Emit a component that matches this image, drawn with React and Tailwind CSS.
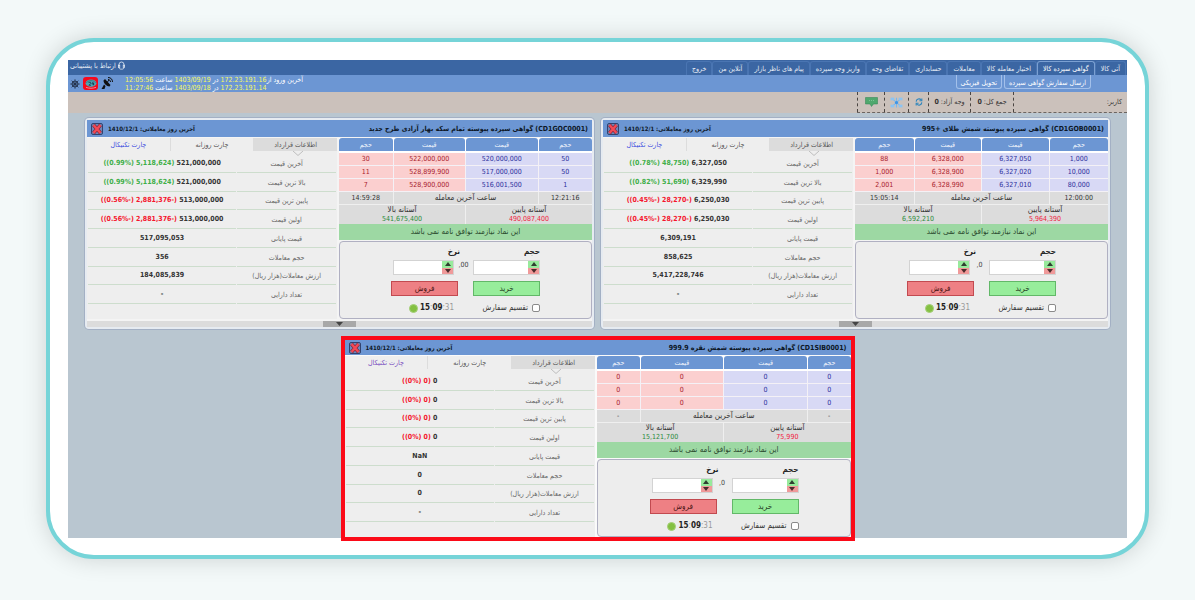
import React, { useState } from 'react';

const navItems = [
  { title: 'آتی کالا' },
  { title: 'گواهی سپرده کالا', active: true },
  { title: 'اختیار معامله کالا' },
  { title: 'معاملات' },
  { title: 'حسابداری' },
  { title: 'تقاضای وجه' },
  { title: 'واریز وجه سپرده' },
  { title: 'پیام های ناظر بازار' },
  { title: 'آنلاین من' },
  { title: 'خروج' },
];

const logins = [
  { label: 'آخرین ورود از', ip: '172.23.191.16', date: '1403/09/19', time: '12:05:56' },
  { label: '', ip: '172.23.191.14', date: '1403/09/18', time: '11:27:46' },
];

const coin = {
  code: 'CD1GOC0001',
  title: 'گواهی سپرده پیوسته تمام سکه بهار آزادی طرح جدید',
  suffix: '',
  decimals: ',00',
  sideCol: 'w-[54px]',
  orders: [
    ['50', '520,000,000', '522,000,000', '30'],
    ['50', '517,000,000', '528,899,900', '11'],
    ['1', '516,001,500', '528,900,000', '7'],
  ],
  times: ['12:21:16', '14:59:28'],
  low: '490,087,400',
  high: '541,675,400',
  info: [
    { label: 'آخرین قیمت', value: '521,000,000', change: '((0.99%) 5,118,624)', up: true },
    { label: 'بالا ترین قیمت', value: '521,000,000', change: '((0.99%) 5,118,624)', up: true },
    { label: 'پایین ترین قیمت', value: '513,000,000', change: '((0.56%-) 2,881,376-)' },
    { label: 'اولین قیمت', value: '513,000,000', change: '((0.56%-) 2,881,376-)' },
    { label: 'قیمت پایانی', value: '517,095,053' },
    { label: 'حجم معاملات', value: '356' },
    { label: 'ارزش معاملات(هزار ریال)', value: '184,085,839' },
    { label: 'تعداد دارایی', value: '-' },
  ],
};

const gold = {
  code: 'CD1GOB0001',
  title: 'گواهی سپرده پیوسته شمش طلای',
  suffix: '995+',
  decimals: ',0',
  sideCol: 'w-[59px]',
  orders: [
    ['1,000', '6,327,050', '6,328,000', '88'],
    ['10,000', '6,327,020', '6,328,900', '1,000'],
    ['80,000', '6,327,010', '6,328,990', '2,001'],
  ],
  times: ['12:00:00', '15:05:14'],
  low: '5,964,390',
  high: '6,592,210',
  info: [
    { label: 'آخرین قیمت', value: '6,327,050', change: '((0.78%) 48,750)', up: true },
    { label: 'بالا ترین قیمت', value: '6,329,990', change: '((0.82%) 51,690)', up: true },
    { label: 'پایین ترین قیمت', value: '6,250,030', change: '((0.45%-) 28,270-)' },
    { label: 'اولین قیمت', value: '6,250,030', change: '((0.45%-) 28,270-)' },
    { label: 'قیمت پایانی', value: '6,309,191' },
    { label: 'حجم معاملات', value: '858,625' },
    { label: 'ارزش معاملات(هزار ریال)', value: '5,417,228,746' },
    { label: 'تعداد دارایی', value: '-' },
  ],
};

const silver = {
  code: 'CD1SIB0001',
  title: 'گواهی سپرده پیوسته شمش نقره',
  suffix: '999.9',
  decimals: ',0',
  sideCol: 'w-[43px]',
  selected: true,
  orders: [
    ['0', '0', '0', '0'],
    ['0', '0', '0', '0'],
    ['0', '0', '0', '0'],
  ],
  times: ['-', '-'],
  low: '75,990',
  high: '15,121,700',
  info: [
    { label: 'آخرین قیمت', value: '0', change: '((0%) 0)' },
    { label: 'بالا ترین قیمت', value: '0', change: '((0%) 0)' },
    { label: 'پایین ترین قیمت', value: '0', change: '((0%) 0)' },
    { label: 'اولین قیمت', value: '0', change: '((0%) 0)' },
    { label: 'قیمت پایانی', value: 'NaN' },
    { label: 'حجم معاملات', value: '0' },
    { label: 'ارزش معاملات(هزار ریال)', value: '0' },
    { label: 'تعداد دارایی', value: '-' },
  ],
};

const HeadsetIcon = () => (
  <svg viewBox="0 0 8 10" className="w-[7px] h-[9px]" fill="none" stroke="#e6edf6" strokeWidth="0.9">
    <path d="M1.2 6V3.8a2.8 2.8 0 0 1 5.6 0V6" />
    <rect x="0.6" y="4.6" width="1.4" height="2.8" />
    <rect x="6" y="4.6" width="1.4" height="2.8" />
    <path d="M6.8 7.6C6.6 8.8 5.6 9.2 4 9.2S1.4 8.8 1.2 7.6" />
  </svg>
);

const GearIcon = () => (
  <svg viewBox="0 0 20 20" className="w-[10px] h-[10px]" stroke="#22304a" fill="none">
    <circle cx="10" cy="10" r="6" strokeWidth="1.8" />
    <circle cx="10" cy="10" r="2" strokeWidth="1.6" />
    <path
      strokeWidth="1.6"
      d="M10 0.5v19M0.5 10h19M3.3 3.3l13.4 13.4M16.7 3.3L3.3 16.7"
    />
  </svg>
);

const GlobeIcon = () => (
  <svg viewBox="0 0 28 24" className="w-[12px] h-[10px]" fill="none">
    <ellipse cx="14" cy="10" rx="13" ry="9" fill="#4fa5b3" />
    <path d="M3 9c3-4 7-5 11-5s8 1 11 5" stroke="#2f7482" strokeWidth="2" />
    <path d="M8 8h5v3l-4 4h5M19 7l-3 5h6M20 9v6" stroke="#14324a" strokeWidth="1.8" />
    <path d="M2 20c7 3 17 3 24 0" stroke="#e0a6ae" strokeWidth="2" />
  </svg>
);

const DishIcon = () => (
  <svg viewBox="0 0 24 26" className="w-[12px] h-[13px]">
    <path d="M5 7c0 5 6 12 12 12l2-3L8 4z" fill="#111" />
    <path d="M6 15l-5 9h6l2-6z" fill="#111" />
    <path d="M12 11l4-5" stroke="#111" strokeWidth="2" />
    <path d="M14 5c3 0 5 2 5 5M14 1c6 0 9 4 9 9" stroke="#111" strokeWidth="2" fill="none" />
  </svg>
);

const RefreshIcon = () => (
  <svg viewBox="0 0 20 20" className="w-[8px] h-[8px]" fill="none" stroke="#2f86bd" strokeWidth="2.8">
    <path d="M3 9a7 7 0 0 1 12.5-4M17 11a7 7 0 0 1-12.5 4" />
    <path d="M17 1v6h-6M3 19v-6h6" />
  </svg>
);

const NetworkIcon = () => (
  <svg viewBox="0 0 24 20" className="w-[13px] h-[11px] shrink-0" stroke="#7ab8ec" strokeWidth="2">
    <path d="M4 3l16 14M20 3L4 17M12 1v18" fill="none" />
    <circle cx="12" cy="10" r="3" fill="#3f95e6" stroke="none" />
    <rect x="1" y="1" width="7" height="5" fill="#8cc4f2" stroke="none" />
    <rect x="16" y="1" width="7" height="5" fill="#8cc4f2" stroke="none" />
    <rect x="1" y="14" width="7" height="5" fill="#8cc4f2" stroke="none" />
    <rect x="16" y="14" width="7" height="5" fill="#8cc4f2" stroke="none" />
  </svg>
);

const MessageIcon = () => (
  <svg viewBox="0 0 26 20" className="w-[13px] h-[10px]">
    <path d="M1 1h24v13h-8l-4 5-3-5H1z" fill="#4fa86e" stroke="#2f8350" />
    <path d="M8 7h2M12 7h2M16 7h2" stroke="#7cc493" strokeWidth="2" />
  </svg>
);

const CloseIcon = () => (
  <svg viewBox="0 0 24 24" className="w-full h-full">
    <rect x="1" y="1" width="22" height="22" rx="3" fill="#6f86b8" stroke="#33436e" strokeWidth="2" />
    <path d="M5 4l14 16M19 4L5 20" stroke="#7c2238" strokeWidth="7" />
    <path d="M5 4l14 16M19 4L5 20" stroke="#f24a56" strokeWidth="5" />
  </svg>
);

const Spinner = ({ label, className }) => {
  const [value, setValue] = useState('');

  const step = (n) => setValue(String(Math.max(0, Number(value) + n)));

  return (
    <div className={`flex h-[15px] bg-white border border-[#d3d3d3] ${className}`}>
      <div className="flex flex-col w-[11px] shrink-0">
        <button type="button" aria-label="افزایش" onClick={() => step(1)} className="flex-1 flex items-center justify-center bg-[#98ea9c]">
          <svg viewBox="0 0 8 4" className="w-[8px] h-[4px]"><path d="M1 4l3-4 3 4z" fill="#2f4030" /></svg>
        </button>
        <button type="button" aria-label="کاهش" onClick={() => step(-1)} className="flex-1 flex items-center justify-center bg-[#f09a9a]">
          <svg viewBox="0 0 8 4" className="w-[8px] h-[4px]"><path d="M1 0l3 4 3-4z" fill="#4a2c2c" /></svg>
        </button>
      </div>
      <input
        type="text"
        aria-label={label}
        value={value}
        onChange={(e) => setValue(e.target.value)}
        className="flex-1 min-w-0 outline-none"
      />
    </div>
  );
};

const OrderForm = ({ decimals }) => {
  const [split, setSplit] = useState(false);

  return (
    <form
      onSubmit={(e) => e.preventDefault()}
      className="h-[78px] pt-[4px] pr-[51px] bg-[#ededed] border border-[#b0b0c2] rounded-[4px]"
    >
      <div className="flex h-[14px] text-[8px] leading-[12px] font-bold text-[#222]">
        <span className="w-[80px]">حجم</span>
        <span>نرخ</span>
      </div>
      <div className="flex">
        <Spinner label="حجم" className="w-[67px]" />
        <span dir="ltr" className="w-[19px] text-center text-[#444]">{decimals}</span>
        <Spinner label="نرخ" className="w-[61px]" />
      </div>
      <div className="flex gap-[15px] mt-[6px] text-[8px]">
        <button type="button" className="w-[67px] h-[15px] leading-[12px] bg-[#97ed9b] border border-[#62b868] text-[#1f3a1f]">خرید</button>
        <button type="button" className="w-[67px] h-[15px] leading-[12px] bg-[#ee8084] border border-[#c24a50] text-[#4a1414]">فروش</button>
      </div>
      <div className="flex items-center h-[14px] mt-[5px]">
        <label className="flex items-center gap-[4px] w-[86px] text-[8px] text-[#333]">
          <input
            type="checkbox"
            checked={split}
            onChange={(e) => setSplit(e.target.checked)}
            className="appearance-none w-[8px] h-[8px] bg-white border border-[#8a8a8a] rounded-[2px] checked:bg-[#3b66a3]"
          />
          تقسیم سفارش
        </label>
        <span dir="ltr" className="flex items-center gap-[2px]">
          <span className="w-[9px] h-[9px] rounded-full bg-[#84c042] border border-[#a4cf78]" />
          <span className="text-[8px] text-[#999]">
            <b className="text-[#222]">15</b>:<b className="text-[#222]">09</b>:31
          </span>
        </span>
      </div>
    </form>
  );
};

const OrderBook = ({ item }) => (
  <table className="w-full table-fixed border-collapse text-center">
    <colgroup>
      <col className={item.sideCol} />
      <col />
      <col />
      <col className={item.sideCol} />
    </colgroup>
    <thead>
      <tr className="h-[14px] text-[#eef3fb]">
        {['حجم', 'قیمت', 'قیمت', 'حجم'].map((h, i) => (
          <th key={i} className="p-0 font-normal border-b border-l last:border-l-0 border-white bg-white">
            <div className="h-[13px] leading-[15px] bg-[#6c96d3] rounded-t-[3px]">{h}</div>
          </th>
        ))}
      </tr>
    </thead>
    <tbody>
      {item.orders.map((row, i) => (
        <tr key={i} className="h-[13px]">
          {row.map((cell, j) => (
            <td
              key={j}
              className={`p-0 leading-[12px] border-b border-l last:border-l-0 border-[#f4f1f6] ${j < 2 ? 'bg-[#d8d9f5] text-[#2c2f9c]' : 'bg-[#fbcfcf] text-[#a8202c]'}`}
            >
              {cell}
            </td>
          ))}
        </tr>
      ))}
      <tr className="h-[13px] bg-[#dcdcdc] text-[#333]">
        <td className="p-0 leading-[12px] border-b border-l border-[#efefef]">{item.times[0]}</td>
        <td colSpan={2} className="p-0 leading-[12px] border-b border-l border-[#efefef] text-[8px]">ساعت آخرین معامله</td>
        <td className="p-0 leading-[12px] border-b border-[#efefef]">{item.times[1]}</td>
      </tr>
      <tr className="h-[20px] bg-[#dcdcdc] text-[#333]">
        <td colSpan={2} className="p-0 border-l border-[#efefef]">
          <div className="text-[8px] leading-[10px]">آستانه پایین</div>
          <div className="leading-[9px] text-[#f0203c]">{item.low}</div>
        </td>
        <td colSpan={2} className="p-0">
          <div className="text-[8px] leading-[10px]">آستانه بالا</div>
          <div className="leading-[9px] text-[#2a8a3a]">{item.high}</div>
        </td>
      </tr>
    </tbody>
  </table>
);

const InfoTab = ({ item }) => (
  <div className="min-w-0 bg-[#eeeeee]">
    <div className="relative flex h-[13px] text-[#555] leading-[15px]">
      <button type="button" className="flex-1 bg-[#dcdcdc]">اطلاعات قرارداد</button>
      <button type="button" className="flex-1 border-r border-[#dcdcdc]">چارت روزانه</button>
      <button type="button" className={`flex-1 border-r border-[#dcdcdc] ${item.selected ? 'text-[#7a4fc0]' : 'text-[#3f50e0]'}`}>چارت تکنیکال</button>
      <svg viewBox="0 0 12 6" className="absolute top-[13px] right-[33px] w-[12px] h-[5px]">
        <path d="M0 0l6 5.4 6-5.4" fill="#eeeeee" stroke="#b4b4b4" />
      </svg>
    </div>
    <table className="w-full h-[150px] mt-[3px] table-fixed border-separate [border-spacing:1px_0] text-center">
      <colgroup>
        <col className="w-2/5" />
        <col />
      </colgroup>
      <tbody>
        {item.info.map((row) => (
          <tr key={row.label}>
            <th scope="row" className="p-0 pt-[2px] font-normal leading-[12px] text-[#666] border-b border-[#cdddcd]">{row.label}</th>
            <td dir="ltr" className="p-0 leading-[12px] font-bold text-[#333] border-b border-[#cdddcd] whitespace-nowrap">
              {row.change && (
                <span className={row.up ? 'text-[#3fae49]' : 'text-[#f5142c]'}>{row.change} </span>
              )}
              {row.value}
            </td>
          </tr>
        ))}
      </tbody>
    </table>
  </div>
);

const ContractPanel = ({ item }) => (
  <section
    className={
      item.selected
        ? 'w-[514px] bg-[#fafafa] border-4 border-[#fb0a18]'
        : 'bg-[#f4f4f4] border-2 border-[#e6ebf1] rounded-[4px] shadow-[0_0_0_1px_#a3b0c4]'
    }
  >
    <header className={`flex items-center justify-between bg-[#6c96d3] px-[4px] text-[#0d1626] font-bold ${item.selected ? 'h-[15px]' : 'h-[17px]'}`}>
      <h2>
        <bdi dir="ltr">({item.code})</bdi> {item.title} <bdi dir="ltr">{item.suffix}</bdi>
      </h2>
      <div className="flex items-center gap-[5px]">
        <span className="text-[6px] whitespace-nowrap">آخرین روز معاملاتی: 1410/12/1</span>
        <button type="button" aria-label="بستن" className="w-[12px] h-[12px]"><CloseIcon /></button>
      </div>
    </header>
    <div className="grid grid-cols-[253fr_250fr] gap-[2px] mt-[1px]">
      <div className="min-w-0">
        <OrderBook item={item} />
        <p className="h-[16px] mb-[1px] leading-[15px] bg-[#9dd8a3] text-center text-[8px] text-[#2b4a2f]">
          این نماد نیازمند توافق نامه نمی باشد
        </p>
        <OrderForm decimals={item.decimals} />
      </div>
      <InfoTab item={item} />
    </div>
    {!item.selected && (
      <div className="flex justify-center h-[6px] mt-[2px] bg-[#dcdcdc]">
        <button type="button" aria-label="بستن جزئیات" className="flex items-center justify-center w-[33px] bg-[#a8a8a8]">
          <svg viewBox="0 0 7 4" className="w-[7px] h-[4px]"><path d="M0 0h7L3.5 4z" fill="#444" /></svg>
        </button>
      </div>
    )}
  </section>
);

const App = () => {
  return (
    <div className="min-h-screen bg-[#f3f9f9] px-[46px] pt-[38px] pb-[40px]">
      <div className="bg-white border-4 border-[#76d4d8] rounded-[48px] p-[18px] pb-[17px] shadow-[0_0_24px_rgba(0,0,0,0.16)]">
        <div dir="rtl" className='bg-[#b9c6d0] text-[7px] leading-[10px] font-["DejaVu_Sans_Condensed","DejaVu_Sans",sans-serif]'>
          <div className="flex justify-between h-[15px] bg-[#3b66a3] text-[#e8eef6] pr-[1px]">
            <nav className="flex items-end">
              {navItems.map((item) => (
                <a
                  key={item.title}
                  href="#"
                  className={`h-[14px] px-[5px] leading-[15px] border-x border-t rounded-t-[3px] whitespace-nowrap ${item.active ? 'border-[#7ba0d2] text-white' : 'border-[#4a75b2]'}`}
                >
                  {item.title}
                </a>
              ))}
            </nav>
            <a href="#" className="flex items-center h-[11px] gap-[2px] pl-[2px]">
              <HeadsetIcon />
              ارتباط با پشتیبانی
            </a>
          </div>

          <div className="flex justify-between h-[17px] bg-[#6c96d3] text-white pr-[36px]">
            <nav className="flex gap-[2px]">
              <a href="#" className="h-[14px] px-[4px] leading-[16px] border-x border-b border-[#a3c0ea] rounded-b-[3px] whitespace-nowrap">ارسال سفارش گواهی سپرده</a>
              <a href="#" className="h-[14px] px-[4px] leading-[16px] border-x border-b border-[#a3c0ea] rounded-b-[3px] whitespace-nowrap">تحویل فیزیکی</a>
            </nav>
            <div className="flex items-center gap-[12px]">
              <div className="text-left leading-[8px]">
                {logins.map((l) => (
                  <div key={l.ip}>
                    {l.label}
                    <span className="text-[#f8f860]">{l.ip}</span> در <span className="text-[#f8f860]">{l.date}</span> ساعت <span className="text-[#f8f860]">{l.time}</span>
                  </div>
                ))}
              </div>
              <div className="flex items-center gap-[3px] pl-[2px]">
                <button type="button" aria-label="ارتباط"><DishIcon /></button>
                <button type="button" aria-label="زبان" className="flex items-center justify-center w-[15px] h-[13px] bg-[#f8081c] rounded-[3px]"><GlobeIcon /></button>
                <button type="button" aria-label="تنظیمات"><GearIcon /></button>
              </div>
            </div>
          </div>

          <div className="flex h-[21px] bg-[#cbc1bb] text-[#333]">
            <div className="flex border-b border-dashed border-[#6b6460] *:flex *:items-center *:justify-center *:border-l *:border-dashed *:border-[#4a4542]">
              <div className="w-[114px] !justify-start pr-[5px]">کاربر:</div>
              <div className="w-[43px] gap-[2px]">جمع کل: <b>0</b></div>
              <div className="w-[42px] gap-[2px]">وجه آزاد: <b>0</b></div>
              <button type="button" aria-label="بروزرسانی" className="w-[20px]"><RefreshIcon /></button>
              <button type="button" aria-label="شبکه" className="w-[24px]"><NetworkIcon /></button>
              <button type="button" aria-label="پیام" className="w-[27px]"><MessageIcon /></button>
            </div>
          </div>

          <main className="flow-root px-[17px]">
            <div className="grid grid-cols-2 gap-[7px] mt-[5px]">
              <ContractPanel item={gold} />
              <ContractPanel item={coin} />
            </div>
            <div className="flex justify-center mt-[7px] -mb-[3px]">
              <ContractPanel item={silver} />
            </div>
          </main>
        </div>
      </div>
    </div>
  );
};

export default App;
